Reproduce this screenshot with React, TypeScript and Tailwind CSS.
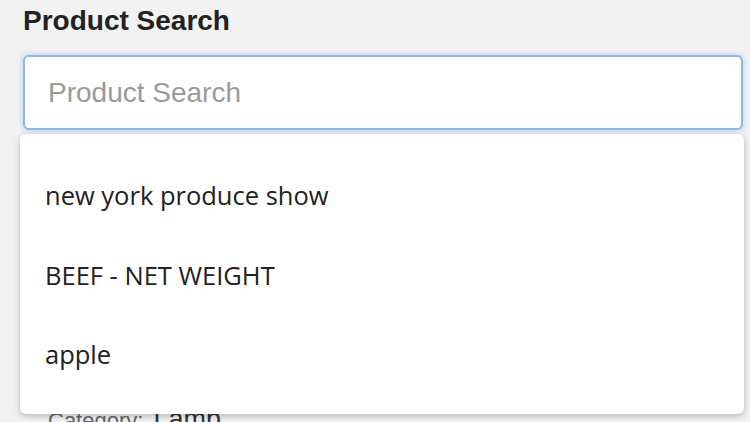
import React from "react";

export default function App() {
  const items = ["new york produce show", "BEEF - NET WEIGHT", "apple"];
  return (
    <div className="relative h-[422px] w-[750px] overflow-hidden bg-[#f2f2f2]" style={{ fontFamily: '"Liberation Sans", Arial, sans-serif' }}>
      <div className="pl-[23px] pr-[7px] pt-[4px]">
        <h1 className="text-[28px] font-bold leading-[34px] text-[#222]">Product Search</h1>
        <div className="mt-[17px] flex h-[75px] items-center rounded-[6px] border-2 border-[#8db7e8] bg-white px-[23px] shadow-[0_0_6px_rgba(102,160,230,0.45)]">
          <span className="text-[28px] text-[#9a9a9a]">Product Search</span>
        </div>
        <div className="mt-[274px] flex items-baseline gap-[10px] pl-[25px] leading-[30px]">
          <span className="text-[22px] text-[#666]">Category:</span>
          <span className="text-[27px] text-[#333]">Lamp</span>
        </div>
      </div>
      <div
        className="absolute left-[20px] top-[134px] flex h-[280px] w-[724px] flex-col rounded-[6px] bg-white pt-[41px] shadow-[0_2px_6px_rgba(0,0,0,0.25)]"
        style={{ fontFamily: '"Open Sans", "Noto Sans", sans-serif' }}
      >
        {items.map((t) => (
          <div key={t} className="flex h-[82px] items-start pl-[25px] text-[25.5px] leading-[40px] text-[#222]">
            {t}
          </div>
        ))}
      </div>
    </div>
  );
}
